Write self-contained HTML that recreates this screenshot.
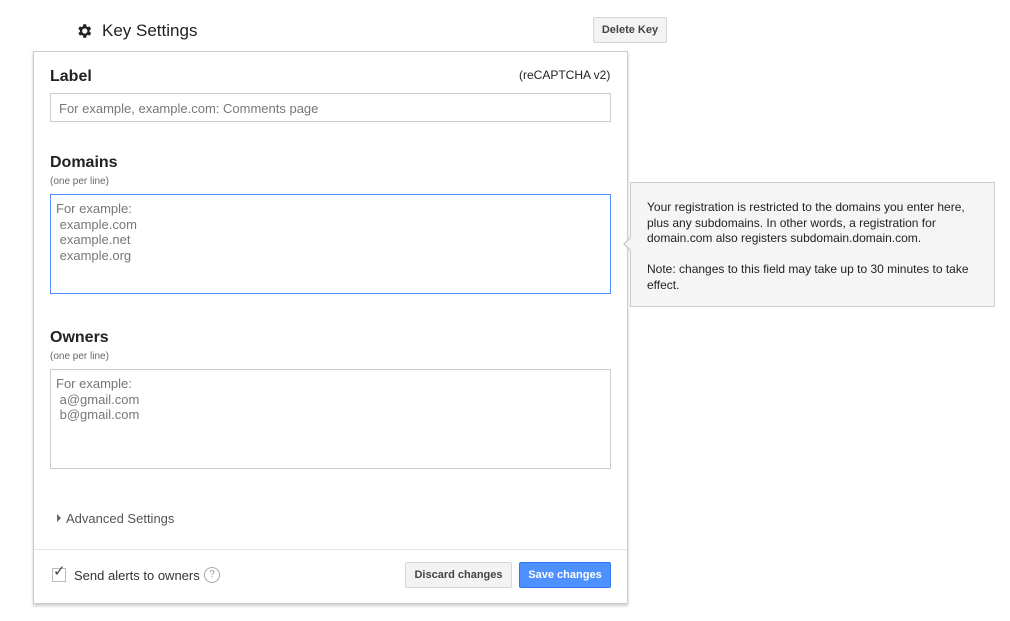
<!DOCTYPE html>
<html><head><style>
body{margin:0;width:1010px;height:621px;background:#fff;font-family:"Liberation Sans",Arial,sans-serif;position:relative;overflow:hidden}
.a{position:absolute}
.h{font-weight:bold;font-size:16px;color:#222}
.s{font-size:10px;color:#666}
.box{position:absolute;border:1px solid #ccc;background:#fff;box-sizing:border-box;color:#777;font-size:13px}
.btn{position:absolute;box-sizing:border-box;border:1px solid #d6d6d6;background:#f3f3f3;border-radius:2px;font-size:11px;font-weight:bold;color:#444;text-align:center}
</style></head><body>
<svg class="a" style="left:75px;top:22px" width="18" height="18" viewBox="0 0 24 24"><path fill="#222" d="M19.4 13a7.5 7.5 0 000-2l2.1-1.6-2-3.5-2.5 1a7.3 7.3 0 00-1.7-1L15 3h-4l-.4 2.9a7.3 7.3 0 00-1.7 1l-2.5-1-2 3.5L6.6 11a7.5 7.5 0 000 2l-2.1 1.6 2 3.5 2.5-1a7.3 7.3 0 001.7 1L11 21h4l.4-2.9a7.3 7.3 0 001.7-1l2.5 1 2-3.5zM13 15.5a3.5 3.5 0 110-7 3.5 3.5 0 010 7z"/></svg>
<div class="a" style="left:102px;top:21px;font-size:17px;color:#222">Key Settings</div>
<div class="btn" style="left:593px;top:17px;width:74px;height:26px;line-height:24px">Delete Key</div>
<div class="a" style="left:33px;top:51px;width:595px;height:553px;border:1px solid #ccc;box-sizing:border-box;box-shadow:0 2px 3px rgba(0,0,0,.2)"></div>
<div class="a h" style="left:50px;top:68px">Label</div>
<div class="a" style="left:519px;top:68px;font-size:12px;color:#222">(reCAPTCHA v2)</div>
<div class="box" style="left:50px;top:93px;width:561px;height:29px;padding:7px 8px">For example, example.com: Comments page</div>
<div class="a h" style="left:50px;top:154px">Domains</div>
<div class="a s" style="left:50px;top:176px">(one per line)</div>
<div class="box" style="left:50px;top:194px;width:561px;height:100px;border-color:#4d90fe;padding:6px 5px;line-height:15.5px">For example:<br>&nbsp;example.com<br>&nbsp;example.net<br>&nbsp;example.org</div>
<div class="a h" style="left:50px;top:329px">Owners</div>
<div class="a s" style="left:50px;top:351px">(one per line)</div>
<div class="box" style="left:50px;top:369px;width:561px;height:100px;padding:6px 5px;line-height:15.5px">For example:<br>&nbsp;a@gmail.com<br>&nbsp;b@gmail.com</div>
<div class="a" style="left:57px;top:514px;width:0;height:0;border-left:4px solid #666;border-top:4px solid transparent;border-bottom:4px solid transparent"></div>
<div class="a" style="left:66px;top:511px;font-size:13px;color:#555">Advanced Settings</div>
<div class="a" style="left:34px;top:549px;width:593px;height:1px;background:#e5e5e5"></div>
<div class="a" style="left:52px;top:568px;width:12px;height:12px;border:1px solid #bbb"></div>
<div class="a" style="left:53px;top:562px;font-size:15px;color:#444">✓</div>
<div class="a" style="left:74px;top:568px;font-size:13px;color:#333">Send alerts to owners</div>
<div class="a" style="left:204px;top:567px;width:14px;height:14px;border:1px solid #aaa;border-radius:50%;font-size:10px;color:#999;text-align:center;line-height:14px">?</div>
<div class="btn" style="left:405px;top:562px;width:107px;height:26px;line-height:24px">Discard changes</div>
<div class="btn" style="left:519px;top:562px;width:92px;height:26px;line-height:24px;background:#4d90fe;border-color:#3079ed;color:#fff">Save changes</div>
<div class="a" style="left:630px;top:182px;width:365px;height:125px;background:#f5f5f5;border:1px solid #ccc;box-sizing:border-box;padding:17px 16px;font-size:12px;color:#222;line-height:15.5px">Your registration is restricted to the domains you enter here, plus any subdomains. In other words, a registration for domain.com also registers subdomain.domain.com.<br><br>Note: changes to this field may take up to 30 minutes to take effect.</div>
<div class="a" style="left:623px;top:236px;width:0;height:0;border-right:8px solid #ccc;border-top:8px solid transparent;border-bottom:8px solid transparent"></div>
<div class="a" style="left:625px;top:237px;width:0;height:0;border-right:7px solid #f5f5f5;border-top:7px solid transparent;border-bottom:7px solid transparent"></div>
</body></html>
